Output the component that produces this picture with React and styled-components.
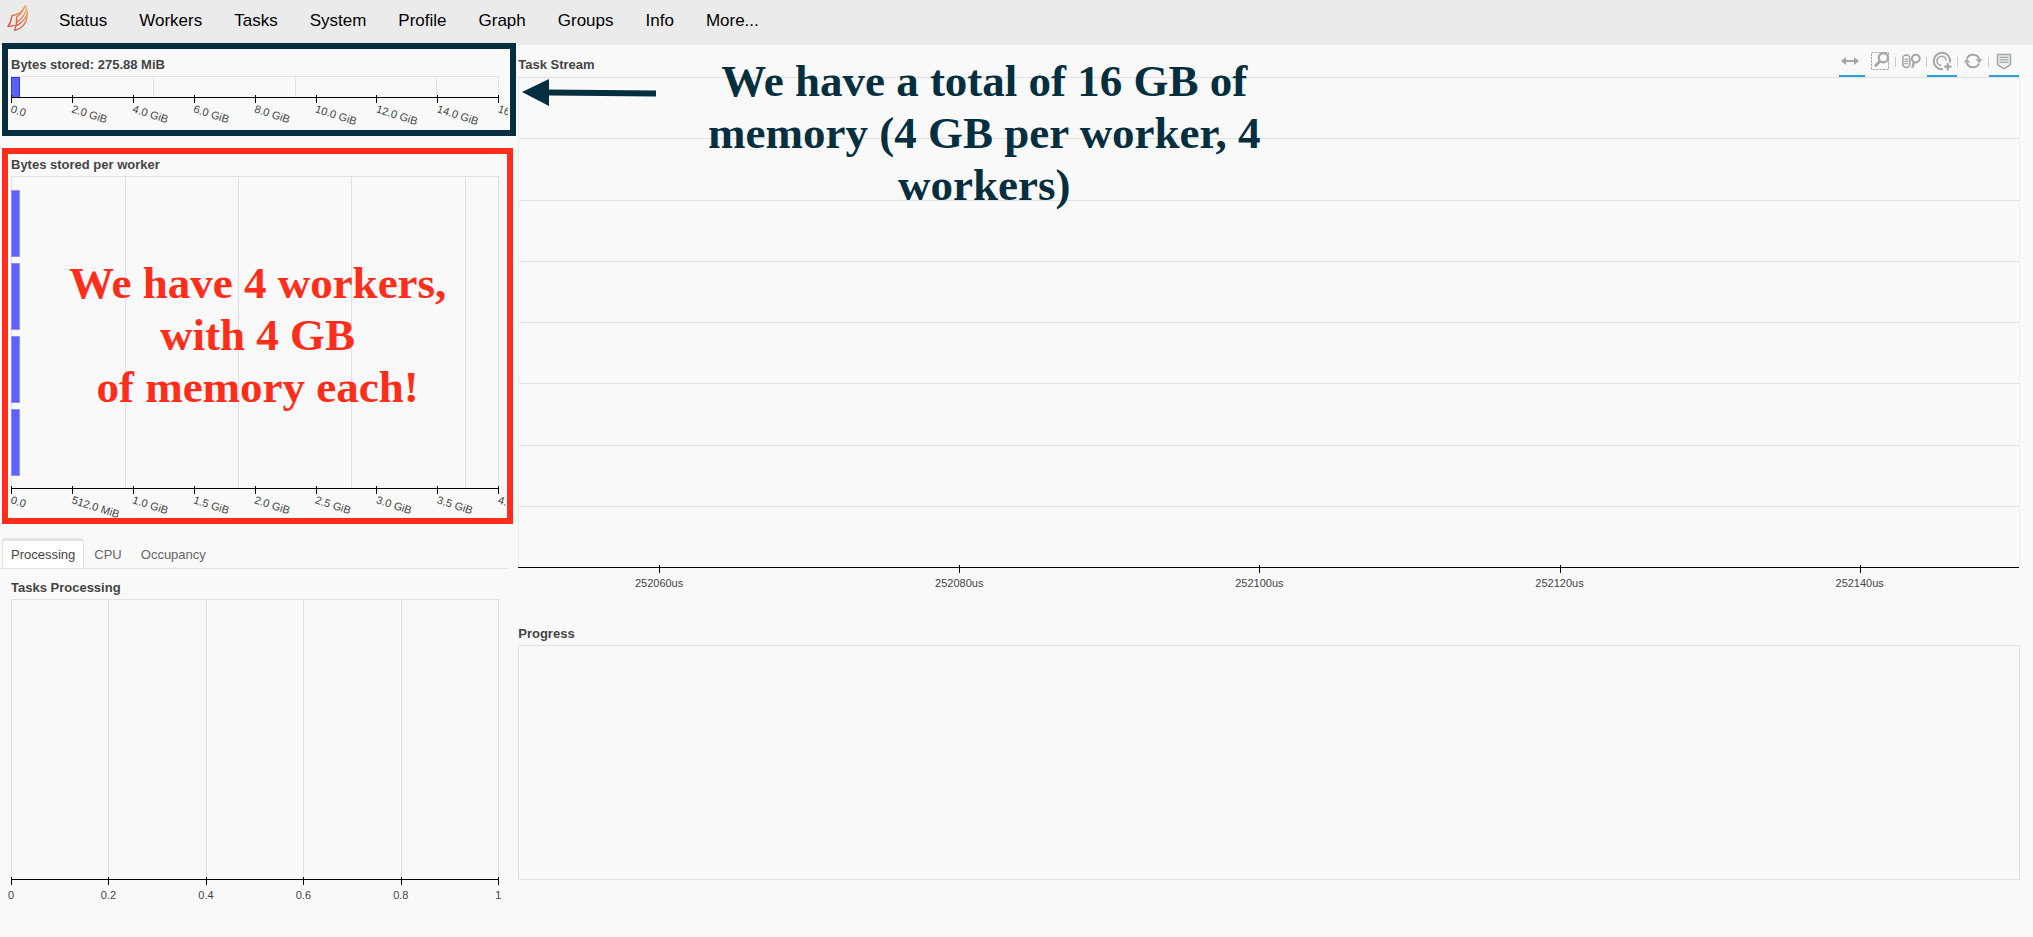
import React from "react";
import styled, { createGlobalStyle } from "styled-components";

const colors = {
  page: "#f9f9f9",
  header: "#ebebeb",
  line: "#e2e2e2",
  faintLine: "#ededed",
  text: "#444444",
  navy: "#052f3f",
  red: "#ff2d1a",
  blue: "#30a0dc",
  icon: "#a1a6a9",
};

const GlobalStyle = createGlobalStyle`
  *, *::before, *::after { box-sizing: border-box; }
  body {
    margin: 0;
    background: ${colors.page};
    color: ${colors.text};
    font-family: "Liberation Sans", Arial, Helvetica, sans-serif;
    font-size: 13px;
  }
`;

/* ---------- Header ---------- */

const Header = styled.header`
  display: flex;
  align-items: flex-start;
  height: 45px;
  padding-left: 7px;
  background: ${colors.header};
`;

const LogoLink = styled.a`
  display: block;
  padding-top: 4px;
  svg { display: block; }
`;

const Nav = styled.nav`
  display: flex;
  gap: 32px;
  padding-left: 30px;
`;

const NavLink = styled.a`
  color: #000;
  font-size: 17px;
  line-height: 42px;
  text-decoration: none;
`;

/* ---------- Page layout ---------- */

const Columns = styled.main`
  display: grid;
  grid-template-columns: 25% minmax(0, 1fr);
`;

const Column = styled.div`
  min-width: 0;
`;

const Panel = styled.section`
  position: relative;
  padding-top: ${(p) => p.$top ?? 12}px;
`;

const PanelTitle = styled.h2`
  height: 19px;
  margin: 0;
  padding-left: ${(p) => (p.$wide ? 10 : 11)}px;
  font-size: 13px;
  font-weight: 700;
  line-height: 16px;
`;

const PanelHead = styled.div`
  display: flex;
  align-items: flex-start;
  justify-content: space-between;
  padding-right: 14px;
  ${PanelTitle} { padding-top: 10px; height: 30px; }
`;

const ChartArea = styled.div`
  overflow: hidden;
  padding: 0 ${(p) => (p.$wide ? "14px 0 10px" : "10px 0 11px")};
  svg { display: block; overflow: visible; }
  text { font-size: 11px; fill: ${colors.text}; }
`;

/* ---------- Tabs ---------- */

const TabList = styled.div`
  display: flex;
  gap: 1px;
  height: 31px;
  padding-left: 2px;
  border-bottom: 1px solid ${colors.line};
`;

const Tab = styled.button`
  height: 30px;
  padding: 0 8px;
  border: 1px solid ${(p) => (p.$active ? colors.line : "transparent")};
  border-top-width: 3px;
  border-bottom: 0;
  border-radius: 4px 4px 0 0;
  background: ${(p) => (p.$active ? "#ffffff" : "transparent")};
  color: ${(p) => (p.$active ? colors.text : "#666666")};
  font: inherit;
`;

/* ---------- Toolbar ---------- */

const Toolbar = styled.div`
  display: flex;
`;

const ToolButton = styled.button`
  display: flex;
  align-items: center;
  justify-content: ${(p) => (p.$first ? "flex-start" : "center")};
  width: ${(p) => (p.$first ? 26 : 30)}px;
  height: 30px;
  padding: 0 0 0 ${(p) => (p.$first ? 1 : 0)}px;
  border: 0;
  border-bottom: 2px solid ${(p) => (p.$active ? colors.blue : "transparent")};
  background: none;
  color: ${colors.icon};
`;

const ToolDivider = styled.span`
  width: 1px;
  height: 10px;
  margin-top: 10px;
  background: #cccccc;
`;

/* ---------- Annotations ---------- */

const Frame = styled.div`
  position: absolute;
  z-index: 1;
  inset: ${(p) => p.$inset};
  display: flex;
  align-items: center;
  justify-content: center;
  padding-bottom: 3px;
  border: 6px solid ${(p) => p.$color};
  pointer-events: none;
`;

const Note = styled.p`
  margin: 0;
  color: ${(p) => p.$color};
  font-family: "Liberation Serif", "Times New Roman", serif;
  font-size: 45px;
  font-weight: 700;
  line-height: 52px;
  text-align: center;
`;

const Callout = styled.div`
  position: absolute;
  z-index: 1;
  top: 10px;
  left: 14px;
  display: flex;
  gap: 38px;
  pointer-events: none;
  svg { flex: none; margin-top: 24px; }
  ${Note} { width: 580px; }
`;

/* ---------- Charts ---------- */

function Chart({
  height,
  space,
  wide,
  bars = [],
  columns = [],
  rows = [],
  ticks,
  slanted,
  sideColor = colors.line,
}) {
  return (
    <ChartArea $wide={wide}>
      <svg width="100%" height={height + space} role="img" shapeRendering="crispEdges">
        {columns.map((x) => (
          <rect key={x} x={`${x}%`} width="1" height={height} fill={colors.line} />
        ))}
        {rows.map((y) => (
          <rect key={y} y={y} width="100%" height="1" fill={colors.line} />
        ))}
        <rect width="1" height={height} fill={sideColor} />
        <rect x="100%" width="1" height={height + 1} fill={sideColor} />
        <rect width="100%" height="1" fill={colors.line} />
        {bars.map((b) => (
          <rect
            key={b.y}
            y={b.y}
            width={`${b.value}%`}
            height={b.height}
            fill="#5f5fff"
            stroke={b.stroke}
            strokeWidth="1"
          />
        ))}
        <rect y={height} width="100%" height="1" fill={ticks ? "#000" : colors.line} />
        {ticks &&
          ticks.map((t) => (
            <svg key={t.label} x={`${t.at}%`} y={height} overflow="visible">
              <rect y="-2" width="1" height="8" fill="#000" />
              {slanted ? (
                <text transform="translate(-1 15) rotate(18)">{t.label}</text>
              ) : (
                <text y="20" textAnchor="middle">{t.label}</text>
              )}
            </svg>
          ))}
      </svg>
    </ChartArea>
  );
}

const spread = (labels) =>
  labels.map((label, i) => ({ label, at: (i * 100) / (labels.length - 1) }));

const storedTicks = spread([
  "0.0", "2.0 GiB", "4.0 GiB", "6.0 GiB", "8.0 GiB",
  "10.0 GiB", "12.0 GiB", "14.0 GiB", "16.0 GiB",
]);
const workerTicks = spread([
  "0.0", "512.0 MiB", "1.0 GiB", "1.5 GiB", "2.0 GiB",
  "2.5 GiB", "3.0 GiB", "3.5 GiB", "4.0 GiB",
]);
const processingTicks = spread(["0", "0.2", "0.4", "0.6", "0.8", "1"]);
const streamTicks = [60, 80, 100, 120, 140].map((n, i) => ({
  label: `${252000 + n}us`,
  at: 9.4 + i * 20,
}));
const streamRows = [61, 123, 184, 245, 306, 368, 429];
const workerBars = [14, 87, 160, 233].map((y) => ({
  y, value: 1.7, height: 66, stroke: "#8f8ffb",
}));

/* ---------- Drawings ---------- */

const Logo = () => (
  <svg width="22" height="28" viewBox="20 12 66 84" fill="none" stroke="url(#flame)" strokeWidth="4" strokeLinejoin="round" strokeLinecap="round">
    <defs>
      <linearGradient id="flame" gradientUnits="userSpaceOnUse" x1="24" y1="80" x2="82" y2="26">
        <stop offset="0" stopColor="#d0503c" />
        <stop offset="0.5" stopColor="#df6f46" />
        <stop offset="1" stopColor="#efb060" />
      </linearGradient>
    </defs>
    <path d="M54 41 Q45 46 35 46 Q33 66 23 79 Q32 79 42 76" />
    <path d="M74 17 Q69 37 49 51 Q50 72 43 91 Q76 84 81 48 Q82 28 74 17" />
    <path d="M77 32 Q72 50 51 65" />
    <path d="M79 46 Q72 64 49 77" />
    <path d="M54 41 Q66 34 74 17" />
  </svg>
);

const iconProps = { width: 20, height: 20, viewBox: "0 0 20 20", fill: "none", stroke: "currentColor" };

const PanIcon = () => (
  <svg {...iconProps} strokeWidth="2">
    <path d="M4 10H16" />
    <path d="M6 6 L1 10 L6 14 Z M14 6 L19 10 L14 14 Z" fill="currentColor" stroke="none" />
  </svg>
);

const BoxZoomIcon = () => (
  <svg {...iconProps}>
    <rect x="1.5" y="1.5" width="17" height="17" strokeDasharray="2.4 1" />
    <circle cx="13.4" cy="6.8" r="4.6" fill={colors.page} strokeWidth="2.2" />
    <path d="M10 10.2 L5 15.2" strokeWidth="2.8" />
  </svg>
);

const WheelZoomIcon = () => (
  <svg {...iconProps} strokeWidth="1.6">
    <rect x="1.8" y="4" width="7" height="12.4" rx="3.5" />
    <path d="M3.5 8.2H7.2 M3.5 10.4H7.2 M3.5 12.6H7.2" strokeWidth="1.2" />
    <circle cx="14.8" cy="7.6" r="3.9" strokeWidth="2" />
    <path d="M13 11 L11.4 16.8" strokeWidth="2.4" />
  </svg>
);

const TapIcon = () => (
  <svg {...iconProps} strokeWidth="2">
    <path d="M18 11.5 A8.2 8.2 0 1 0 11 18.1" />
    <path d="M14.2 9.5 A4.6 4.6 0 1 0 9.4 14.4" strokeWidth="1.6" />
    <path d="M15.8 12V19.4 M12.1 15.7H19.5" strokeWidth="2.2" />
  </svg>
);

const ResetIcon = () => (
  <svg {...iconProps} strokeWidth="2">
    <path d="M3.8 7.6 A6.8 6.8 0 0 1 16.4 8.4" />
    <path d="M16.2 12.4 A6.8 6.8 0 0 1 3.6 11.6" />
    <path d="M12.5 8.2 H19.5 L16.2 12 Z M0.5 11.6 H7.5 L3.8 7.8 Z" fill="currentColor" stroke="none" />
  </svg>
);

const HoverIcon = () => (
  <svg {...iconProps} strokeWidth="1.5">
    <path d="M3.5 3.5H16.5V13.6L10 17.8L3.5 13.6Z" fill="#eeefef" strokeLinejoin="round" />
    <path d="M5.5 6.3H14.5 M5.5 8.8H14.5 M5.5 11.3H14.5" strokeWidth="1.3" />
  </svg>
);

const Arrow = () => (
  <svg width="134" height="28" viewBox="0 0 134 28" fill={colors.navy}>
    <path d="M0 13 L27 0 V10.5 L134 11.5 V17.5 L27 16.5 V27 Z" />
  </svg>
);

const pages = ["Status", "Workers", "Tasks", "System", "Profile", "Graph", "Groups", "Info", "More..."];

const tools = [
  { name: "Box Zoom", Icon: BoxZoomIcon },
  { name: "Wheel Zoom", Icon: WheelZoomIcon },
  { name: "Tap", Icon: TapIcon, active: true },
  { name: "Reset", Icon: ResetIcon },
  { name: "Hover", Icon: HoverIcon, active: true },
];

export default function App() {
  return (
    <>
      <GlobalStyle />
      <Header>
        <LogoLink href="#" aria-label="Home"><Logo /></LogoLink>
        <Nav>
          {pages.map((name) => (
            <NavLink key={name} href="#">{name}</NavLink>
          ))}
        </Nav>
      </Header>
      <Columns>
        <Column>
          <Panel>
            <PanelTitle>Bytes stored: 275.88 MiB</PanelTitle>
            <Chart
              height={21}
              space={48}
              slanted
              ticks={storedTicks}
              columns={[29.1, 58.2, 87.3]}
              bars={[{ y: 1, value: 1.7, height: 20, stroke: "#3434f0" }]}
            />
            <Frame $color={colors.navy} $inset="-2px -8px 9px 2px" />
          </Panel>
          <Panel>
            <PanelTitle>Bytes stored per worker</PanelTitle>
            <Chart
              height={312}
              space={50}
              slanted
              ticks={workerTicks}
              columns={[23.3, 46.6, 69.8, 93.1]}
              bars={workerBars}
            />
            <Frame $color={colors.red} $inset="3px -5px 14px 2px">
              <Note $color={colors.red}>
                We have 4 workers,
                <br />
                with 4 GB
                <br />
                of memory each!
              </Note>
            </Frame>
          </Panel>
          <TabList role="tablist">
            <Tab role="tab" aria-selected="true" $active>Processing</Tab>
            <Tab role="tab" aria-selected="false">CPU</Tab>
            <Tab role="tab" aria-selected="false">Occupancy</Tab>
          </TabList>
          <Panel $top={11}>
            <PanelTitle>Tasks Processing</PanelTitle>
            <Chart height={280} space={50} ticks={processingTicks} columns={[20, 40, 60, 80]} />
          </Panel>
        </Column>
        <Column>
          <Panel $top={2}>
            <PanelHead>
              <PanelTitle $wide>Task Stream</PanelTitle>
              <Toolbar role="toolbar" aria-label="Plot tools">
                <ToolButton $first $active aria-label="Pan"><PanIcon /></ToolButton>
                {tools.map(({ name, Icon, active }, i) => (
                  <React.Fragment key={name}>
                    {i > 0 && <ToolDivider />}
                    <ToolButton $active={active} aria-label={name}><Icon /></ToolButton>
                  </React.Fragment>
                ))}
              </Toolbar>
            </PanelHead>
            <Chart
              wide
              height={490}
              space={47}
              ticks={streamTicks}
              rows={streamRows}
              sideColor={colors.faintLine}
            />
            <Callout>
              <Arrow />
              <Note $color={colors.navy}>
                We have a total of 16 GB of memory (4 GB per worker, 4 workers)
              </Note>
            </Callout>
          </Panel>
          <Panel>
            <PanelTitle $wide>Progress</PanelTitle>
            <Chart wide height={234} space={50} />
          </Panel>
        </Column>
      </Columns>
    </>
  );
}
